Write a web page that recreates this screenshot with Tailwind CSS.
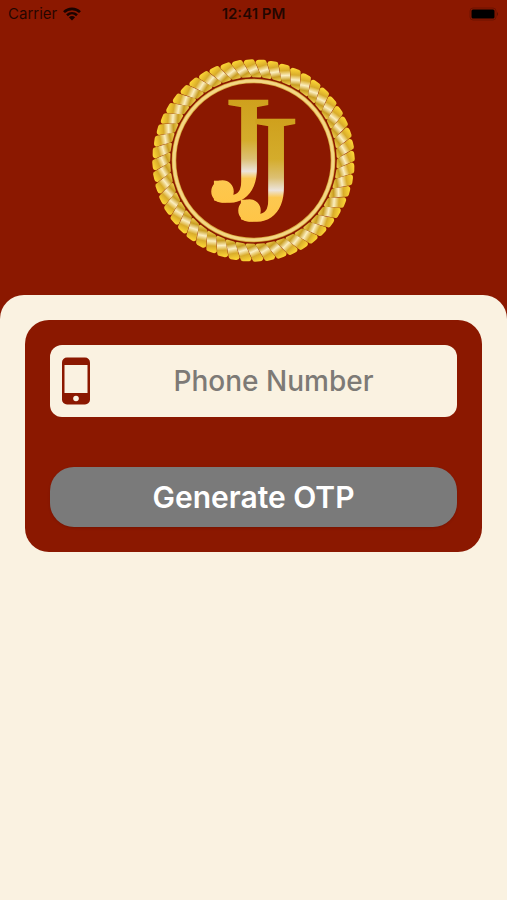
<!DOCTYPE html>
<html lang="en">
<head>
  <meta charset="UTF-8" />
  <meta name="viewport" content="width=device-width, initial-scale=1.0"/>
  <title>Login</title>
  <script src="https://cdn.jsdelivr.net/npm/@tailwindcss/browser@4"></script>
</head>
<body class="min-h-screen flex flex-col bg-[#8b1800] font-['Inter',sans-serif]">

  <!-- Status Bar -->
  <div class="grid grid-cols-3 items-center h-7 px-2 text-black/75">
    <div class="flex items-center gap-1.5 text-[15px]">
      <span>Carrier</span>
      <svg class="w-[18px] h-[14px]" viewBox="0 0 18 14" fill="none" stroke="#1a0300" stroke-width="2.6">
        <path d="M1 5.2C5.5 .7 12.5 .7 17 5.2"/>
        <path d="M4 8.3C7 5.5 11 5.5 14 8.3"/>
        <path d="M9 13.5L5.9 10.3C7.7 8.7 10.3 8.7 12.1 10.3Z" fill="#1a0300" stroke="none"/>
      </svg>
    </div>
    <span class="text-[15px] font-semibold text-center">12:41 PM</span>
    <svg class="w-[30px] h-[14px] justify-self-end" viewBox="0 0 30 14">
      <rect x="1" y="1" width="26" height="12" rx="3" fill="none" stroke="#6d1200"/>
      <rect x="2.5" y="2.5" width="23" height="9" rx="1.5" fill="#000"/>
      <path d="M28 5q2 2 0 4z" fill="#5a0f00"/>
    </svg>
  </div>

  <!-- Logo -->
  <header class="flex justify-center pt-[30px] pb-8">
    <svg class="w-[205px] h-[205px]" viewBox="-102.5 -102.5 205 205" role="img" aria-label="JJ logo">
      <defs>
        <linearGradient id="strandGold" gradientUnits="userSpaceOnUse" x1="-4" y1="-101" x2="4" y2="-83">
          <stop offset="0" stop-color="#f9d235"/>
          <stop offset=".3" stop-color="#d9ac2a"/>
          <stop offset=".55" stop-color="#fbeec0"/>
          <stop offset=".8" stop-color="#c99e22"/>
          <stop offset="1" stop-color="#e8c548"/>
        </linearGradient>
        <linearGradient id="letterGold" gradientUnits="userSpaceOnUse" x1="0" y1="-62" x2="0" y2="42">
          <stop offset="0" stop-color="#cfa01c"/>
          <stop offset=".4" stop-color="#d4ac2b"/>
          <stop offset=".58" stop-color="#dcc073"/>
          <stop offset=".7" stop-color="#ece4dc"/>
          <stop offset=".77" stop-color="#fcc850"/>
          <stop offset="1" stop-color="#ffc547"/>
        </linearGradient>
      </defs>
      <g id="rope" fill="url(#strandGold)"></g>
      <circle r="79.5" fill="none" stroke="#d9a93c" stroke-width="4.5"/>
      <circle r="79.5" fill="none" stroke="#f3d684" stroke-width="3"/>
      <!-- Monogram, each letter with a round ball end -->
      <g fill="url(#letterGold)" stroke="url(#letterGold)" stroke-width="1.5" font-family="Liberation Serif, serif" font-size="152">
        <text x="-42" y="40">J</text>
        <circle cx="-31" cy="31" r="10.5"/>
      </g>
      <g transform="translate(27 19)" fill="url(#letterGold)" stroke="url(#letterGold)" stroke-width="1.5" font-family="Liberation Serif, serif" font-size="152">
        <text x="-42" y="40">J</text>
        <circle cx="-31" cy="31" r="10.5"/>
      </g>
    </svg>
  </header>

  <!-- Login Form -->
  <main class="flex-1 bg-[#faf2e1] rounded-t-3xl p-[25px]">
    <form id="otpForm" class="flex flex-col gap-[50px] bg-[#8b1800] rounded-3xl p-[25px]">
      <div class="flex items-center h-[72px] pl-3 bg-[#faf2e1] rounded-xl">
        <label for="phone" aria-label="Phone Number">
          <svg class="w-7 h-12" viewBox="0 0 28 48">
            <rect width="28" height="47" y=".5" rx="5" fill="#8b1800"/>
            <rect x="2.5" y="8" width="23" height="28" fill="#faf2e1"/>
            <circle cx="14" cy="41.5" r="2.8" fill="#faf2e1"/>
          </svg>
        </label>
        <input type="tel" id="phone" placeholder="Phone Number"
               class="flex-1 min-w-0 h-full text-center text-[28px] font-medium text-[#8b1800] placeholder:text-[#7d7a76] focus:outline-none" />
      </div>
      <button type="submit"
              class="h-[60px] bg-[#7a7a7a] text-white text-[30px] font-semibold rounded-3xl shadow-sm">
        Generate OTP
      </button>
    </form>
  </main>

  <script>
    // Twist the strands around the rope ring
    const rope = document.getElementById("rope");
    const strands = 52;
    for (let i = 0; i < strands; i++) {
      const strand = document.createElementNS("http://www.w3.org/2000/svg", "path");
      strand.setAttribute("d", "M-9.8 -97.5Q-9.8 -100.5 -6.5 -100.8L-1.5 -101.3Q.5 -101.5 1.3 -99Q4 -92 7.8 -85Q8 -83 6.5 -83L-.5 -83.3Q-1.8 -83.5 -2.5 -85Q-6 -91 -9.8 -97.5Z");
      strand.setAttribute("transform", `rotate(${i * 360 / strands})`);
      rope.appendChild(strand);
    }

    document.getElementById("otpForm").addEventListener("submit", e => e.preventDefault());
  </script>
</body>
</html>
